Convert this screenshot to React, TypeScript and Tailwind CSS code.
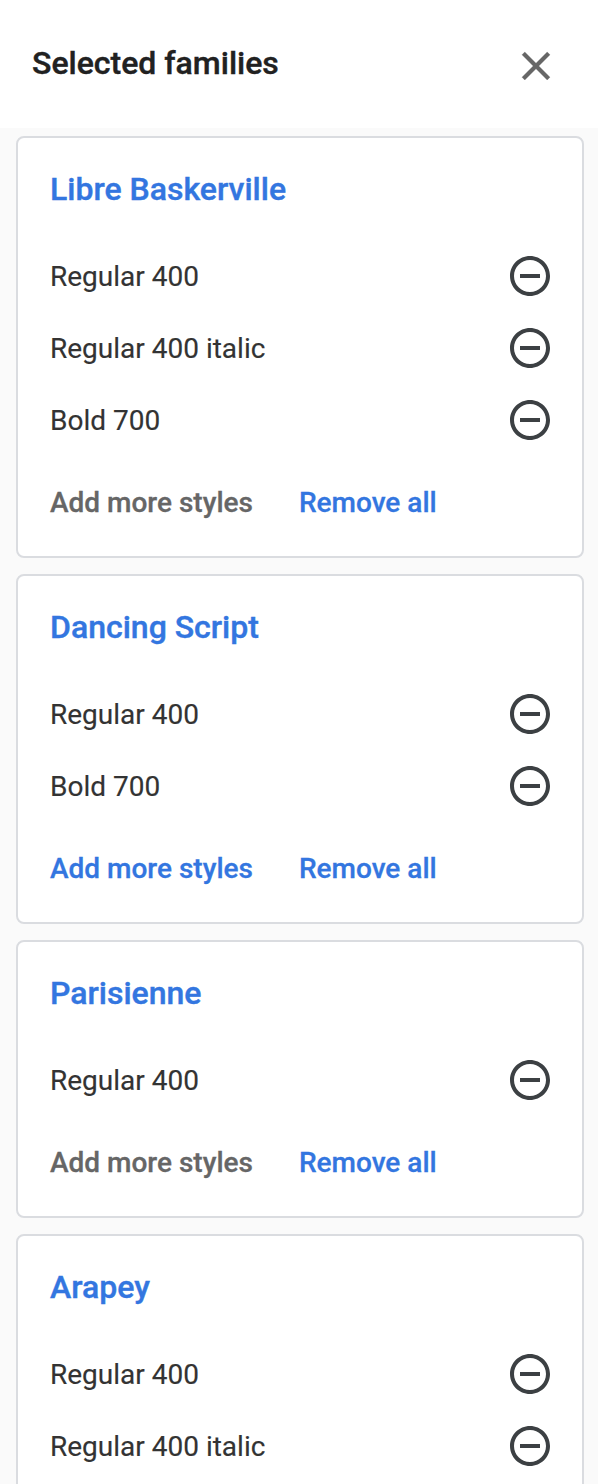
import React from "react";

type Family = { name: string; styles: string[]; actions?: { canAdd: boolean } };

const families: Family[] = [
  { name: "Libre Baskerville", styles: ["Regular 400", "Regular 400 italic", "Bold 700"], actions: { canAdd: false } },
  { name: "Dancing Script", styles: ["Regular 400", "Bold 700"], actions: { canAdd: true } },
  { name: "Parisienne", styles: ["Regular 400"], actions: { canAdd: false } },
  { name: "Arapey", styles: ["Regular 400", "Regular 400 italic"] },
];

function CloseIcon() {
  return (
    <svg className="size-12" viewBox="0 0 24 24" fill="#666666" stroke="#666666" strokeWidth="0.15" strokeLinejoin="round">
      <path d="M19 6.41L17.59 5 12 10.59 6.41 5 5 6.41 10.59 12 5 17.59 6.41 19 12 13.41 17.59 19 19 17.59 13.41 12z" />
    </svg>
  );
}

function RemoveIcon() {
  return (
    <svg className="size-12" viewBox="0 0 24 24" fill="#3c4043">
      <path d="M7 11v2h10v-2H7zm5-9C6.48 2 2 6.48 2 12s4.48 10 10 10 10-4.48 10-10S17.52 2 12 2zm0 18c-4.41 0-8-3.59-8-8s3.59-8 8-8 8 3.59 8 8-3.59 8-8 8z" />
    </svg>
  );
}

function FamilyCard({ family }: { family: Family }) {
  return (
    <section className="shrink-0 rounded-lg border-2 border-[#dadce0] bg-white px-8 pb-[31px]">
      <h2 className="flex h-[102px] items-center text-[32px] leading-none font-medium text-[#3376e0] [-webkit-text-stroke:0.4px]">{family.name}</h2>
      <ul>
        {family.styles.map((style) => (
          <li key={style} className="-mr-1 flex h-[72px] items-center justify-between text-[28px] leading-[42px] text-[#333333]">
            <span className="pt-0.5 [-webkit-text-stroke:0.15px]">{style}</span>
            <button aria-label="Remove style"><RemoveIcon /></button>
          </li>
        ))}
      </ul>
      {family.actions && (
        <div className="flex h-[69px] items-end gap-[46px] text-[28px] leading-[44px] font-medium text-[#3376e0] [-webkit-text-stroke:0.3px]">
          <button className={family.actions.canAdd ? "text-[#3376e0]" : "text-[#666666]"}>Add more styles</button>
          <button>Remove all</button>
        </div>
      )}
    </section>
  );
}

export default function App() {
  return (
    <div className="flex h-[1484px] w-[598px] flex-col overflow-hidden bg-[#fafafa] font-['Roboto',sans-serif]">
      <header className="flex h-32 shrink-0 items-center justify-between bg-white pr-[38px] pl-8">
        <h1 className="pb-0.5 text-[32px] leading-none font-medium text-[#212121] [-webkit-text-stroke:0.4px]">Selected families</h1>
        <button aria-label="Close" className="pt-1"><CloseIcon /></button>
      </header>
      <main className="flex flex-col gap-4 pt-2 pr-3.5 pl-4">
        {families.map((family) => <FamilyCard key={family.name} family={family} />)}
      </main>
    </div>
  );
}
